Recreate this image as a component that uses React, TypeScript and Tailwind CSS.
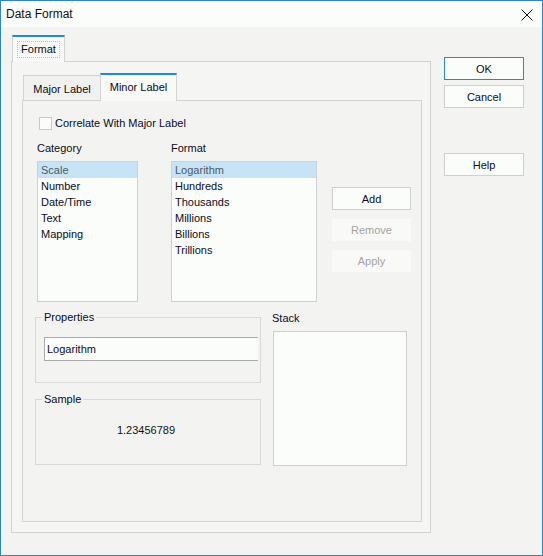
import React from "react";

const font = { fontFamily: '"Liberation Sans", Arial, sans-serif' };

function WinButton({ label, primary, disabled, className = "" }: { label: string; primary?: boolean; disabled?: boolean; className?: string }) {
  const base = "flex items-center justify-center text-[11px] leading-[16px] ";
  const look = disabled
    ? "bg-[#f9faf8] text-[#a3a3a3] border border-transparent"
    : primary
    ? "bg-[#fbfdfb] text-[#0b0b1e] border border-[#2b86d6]"
    : "bg-[#fbfdfb] text-[#0b0b1e] border border-[#cfd0cf]";
  return <div className={base + look + " " + className}>{label}</div>;
}

function ListBox({ items, width }: { items: string[]; width: string }) {
  return (
    <div className={"h-[141px] border border-[#cfd0cf] bg-[#fbfdfb] " + width}>
      {items.map((it, i) => (
        <div
          key={it}
          className={
            "h-[16px] pl-[3px] text-[11px] leading-[16px] " +
            (i === 0 ? "bg-[#c6e4f5] text-[#4b5a68]" : "text-[#0b0b1e]")
          }
        >
          {it}
        </div>
      ))}
    </div>
  );
}

export default function App() {
  return (
    <div style={font} className="w-[543px] h-[556px] border border-[#2a86d4] bg-[#f3f4f2] flex flex-col text-[#0b0b1e] overflow-hidden">
      {/* Title bar */}
      <div className="h-[26px] bg-[#fbfdfb] flex items-center justify-between pl-[5px] pr-[9px] shrink-0">
        <span className="text-[12px] leading-[16px] text-[#111]">Data Format</span>
        <svg width="12" height="12" viewBox="0 0 12 12" className="mt-[1px]">
          <path d="M0.5 0.5 L11.5 11.5 M11.5 0.5 L0.5 11.5" stroke="#111" strokeWidth="1" />
        </svg>
      </div>

      {/* Body */}
      <div className="flex pt-[8px] pl-[10px]">
        {/* Left: outer tab control */}
        <div className="w-[420px] flex flex-col">
          <div className="flex pl-[1px] h-[26px] items-end">
            <div className="relative z-10 -mb-px w-[53px] h-[27px] bg-[#f9faf8] border-t-2 border-t-[#1f8ad8] border-l border-r border-[#d3d4d2] flex items-center justify-center">
              <span className="text-[11px] leading-[15px] px-[3px] border border-dotted border-[#9cc9ea]">Format</span>
            </div>
          </div>
          <div className="h-[472px] border border-[#d3d4d2] bg-[#f5f6f4] pt-[11px] pl-[10px]">
            {/* Inner tab control */}
            <div className="w-[400px] flex flex-col">
              <div className="flex h-[27px] items-end pl-[1px]">
                <div className="w-[77px] h-[25px] border-t border-l border-[#d3d4d2] bg-[#f1f2f0] flex items-center justify-center text-[11px] leading-[16px] pt-[1px]">
                  Major Label
                </div>
                <div className="relative z-10 -mb-px w-[77px] h-[28px] border-t-2 border-t-[#1f8ad8] border-l border-r border-[#d3d4d2] bg-[#f9faf8] flex items-center justify-center text-[11px] leading-[16px] pb-[2px]">
                  Minor Label
                </div>
              </div>
              <div className="h-[422px] border border-[#d3d4d2] bg-[#f3f4f2] pl-[14px] pt-[15px] flex flex-col">
                {/* Checkbox row */}
                <div className="flex items-center h-[14px] pl-[2px]">
                  <div className="w-[13px] h-[13px] border border-[#c9cac8] bg-[#fbfdfb]" />
                  <span className="ml-[3px] text-[11px] leading-[16px]">Correlate With Major Label</span>
                </div>

                {/* Lists */}
                <div className="flex mt-[10px]">
                  <div className="flex flex-col">
                    <div className="h-[16px] text-[11px] leading-[16px] mb-[5px]">Category</div>
                    <ListBox width="w-[101px]" items={["Scale", "Number", "Date/Time", "Text", "Mapping"]} />
                  </div>
                  <div className="flex flex-col ml-[33px]">
                    <div className="h-[16px] text-[11px] leading-[16px] mb-[5px]">Format</div>
                    <ListBox width="w-[146px]" items={["Logarithm", "Hundreds", "Thousands", "Millions", "Billions", "Trillions"]} />
                  </div>
                  <div className="flex flex-col ml-[15px] pt-[47px] gap-[9px]">
                    <WinButton label="Add" className="w-[79px] h-[23px]" />
                    <WinButton label="Remove" disabled className="w-[79px] h-[22px]" />
                    <WinButton label="Apply" disabled className="w-[79px] h-[22px]" />
                  </div>
                </div>

                {/* Bottom section */}
                <div className="flex mt-[7px] -ml-[2px]">
                  <div className="flex flex-col w-[226px]">
                    <fieldset className="h-[74px] border border-[#d9dad8] m-0 p-0 min-w-0">
                      <legend className="ml-[6px] px-[2px] text-[11px] leading-[16px]">Properties</legend>
                      <div className="ml-[8px] mt-[12px] w-[214px] h-[24px] border border-r-0 border-[#a9aaa9] bg-[#fbfdfb] pl-[2px] text-[11px] leading-[22px] text-[#0b0b30]">
                        Logarithm
                      </div>
                    </fieldset>
                    <fieldset className="mt-[8px] h-[74px] border border-[#d9dad8] m-0 p-0 min-w-0">
                      <legend className="ml-[6px] px-[2px] text-[11px] leading-[16px]">Sample</legend>
                      <div className="flex justify-center mt-[16px] pr-[4px]">
                        <span className="text-[11px] leading-[14px] text-[#111]">1.23456789</span>
                      </div>
                    </fieldset>
                  </div>
                  <div className="flex flex-col ml-[11px]">
                    <div className="h-[16px] text-[11px] leading-[16px] mt-[1px]">Stack</div>
                    <div className="mt-[5px] ml-[1px] w-[134px] h-[135px] border border-[#cfd0cf] bg-[#fbfdfb]" />
                  </div>
                </div>
              </div>
            </div>
          </div>
        </div>

        {/* Right buttons */}
        <div className="flex flex-col ml-[13px] pt-[22px]">
          <WinButton label="OK" primary className="w-[80px] h-[23px]" />
          <WinButton label="Cancel" className="w-[80px] h-[23px] mt-[5px]" />
          <WinButton label="Help" className="w-[80px] h-[23px] mt-[45px]" />
        </div>
      </div>
    </div>
  );
}
